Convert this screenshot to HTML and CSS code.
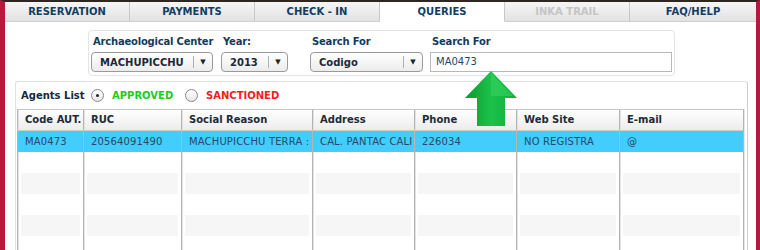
FILE: index.html
```html
<!DOCTYPE html>
<html>
<head>
<meta charset="utf-8">
<link rel="stylesheet" href="styles.css">
</head>
<body>
<div class="frame">
  <div class="tabs">
    <div class="tab">RESERVATION</div>
    <div class="tab">PAYMENTS</div>
    <div class="tab">CHECK - IN</div>
    <div class="tab active">QUERIES</div>
    <div class="tab disabled">INKA TRAIL</div>
    <div class="tab">FAQ/HELP</div>
  </div>
  <div class="content">
    <div class="filters">
      <div class="field f1">
        <div class="label">Archaeological Center</div>
        <div class="select w1"><span class="val">MACHUPICCHU</span><span class="btn">&#9660;</span></div>
      </div>
      <div class="field f2">
        <div class="label">Year:</div>
        <div class="select w2"><span class="val">2013</span><span class="btn">&#9660;</span></div>
      </div>
      <div class="field f3">
        <div class="label">Search For</div>
        <div class="select w3"><span class="val">Codigo</span><span class="btn">&#9660;</span></div>
      </div>
      <div class="field f4">
        <div class="label">Search For</div>
        <div class="input">MA0473</div>
      </div>
    </div>
    <div class="agents">
      <div class="agents-head">
        <span class="title">Agents List</span>
        <span class="radio checked"></span><span class="opt green">APPROVED</span>
        <span class="radio"></span><span class="opt red">SANCTIONED</span>
      </div>
      <div class="grid">
        <div class="row head">
          <div class="c">Code AUT.</div><div class="c">RUC</div><div class="c">Social Reason</div><div class="c">Address</div><div class="c">Phone</div><div class="c">Web Site</div><div class="c">E-mail</div>
        </div>
        <div class="row sel">
          <div class="c">MA0473</div><div class="c">20564091490</div><div class="c">MACHUPICCHU TERRA :</div><div class="c">CAL. PANTAC CALI</div><div class="c">226034</div><div class="c">NO REGISTRA</div><div class="c">@</div>
        </div>
        <div class="row"><div class="c">&nbsp;</div><div class="c">&nbsp;</div><div class="c">&nbsp;</div><div class="c">&nbsp;</div><div class="c">&nbsp;</div><div class="c">&nbsp;</div><div class="c">&nbsp;</div></div>
        <div class="row alt"><div class="c">&nbsp;</div><div class="c">&nbsp;</div><div class="c">&nbsp;</div><div class="c">&nbsp;</div><div class="c">&nbsp;</div><div class="c">&nbsp;</div><div class="c">&nbsp;</div></div>
        <div class="row"><div class="c">&nbsp;</div><div class="c">&nbsp;</div><div class="c">&nbsp;</div><div class="c">&nbsp;</div><div class="c">&nbsp;</div><div class="c">&nbsp;</div><div class="c">&nbsp;</div></div>
        <div class="row alt"><div class="c">&nbsp;</div><div class="c">&nbsp;</div><div class="c">&nbsp;</div><div class="c">&nbsp;</div><div class="c">&nbsp;</div><div class="c">&nbsp;</div><div class="c">&nbsp;</div></div>
        <div class="row"><div class="c">&nbsp;</div><div class="c">&nbsp;</div><div class="c">&nbsp;</div><div class="c">&nbsp;</div><div class="c">&nbsp;</div><div class="c">&nbsp;</div><div class="c">&nbsp;</div></div>
      </div>
    </div>
    <svg class="arrow" width="54" height="56" viewBox="0 0 54 56">
      <defs>
        <linearGradient id="g" x1="0" y1="0" x2="1" y2="0">
          <stop offset="0" stop-color="#0a9a2e"/>
          <stop offset="0.5" stop-color="#1cc24a"/>
          <stop offset="1" stop-color="#0fae3a"/>
        </linearGradient>
      </defs>
      <polygon points="26,0 52,27 40,27 40,55 12,55 12,27 0,27" fill="url(#g)"/>
      <polygon points="26,2 48,25 26,25" fill="#3ad866" opacity="0.5"/>
    </svg>
  </div>
</div>
</body>
</html>
```
FILE: styles.css
```css
html, body {
  margin: 0;
  padding: 0;
  background: #fff;
}
.frame {
  width: 760px;
  height: 250px;
  box-sizing: border-box;
  border-left: 5px solid #b9173b;
  border-right: 4px solid #b9173b;
  border-top: 2px solid #2e2620;
  overflow: hidden;
  font-family: "DejaVu Sans", Verdana, sans-serif;
  position: relative;
}
.tabs {
  display: flex;
  height: 19px;
  border-bottom: 1px solid #cfcfcf;
}
.tab {
  width: 125px;
  box-sizing: border-box;
  text-align: center;
  font-size: 10px;
  font-weight: bold;
  color: #123d63;
  line-height: 19px;
  background: linear-gradient(#f6f6f6, #e2e2e2);
  border-right: 1px solid #c8c8c8;
}
.tab.active {
  background: #fff;
  border-bottom: 1px solid #fff;
  height: 20px;
}
.tab.disabled {
  color: #c4c4c4;
}
.tab:last-child {
  border-right: none;
  width: 126px;
}
.content {
  position: relative;
  padding-top: 8px;
}
.filters {
  margin: 0 0 0 83px;
  width: 587px;
  height: 46px;
  box-sizing: border-box;
  border: 1px solid #e4e4e4;
  border-radius: 4px;
  display: flex;
  padding: 5px 0 0 2px;
}
.field {
  display: flex;
  flex-direction: column;
}
.f1 { width: 130px; }
.f2 { width: 89px; }
.f3 { width: 120px; }
.label {
  font-size: 10px;
  font-weight: bold;
  color: #143a5c;
  padding-left: 2px;
  height: 16px;
  line-height: 12px;
  white-space: nowrap;
  letter-spacing: -0.2px;
}
.select {
  height: 20px;
  box-sizing: border-box;
  border: 1px solid #9a9a9a;
  border-radius: 4px;
  background: linear-gradient(#ffffff, #ececec);
  display: flex;
  align-items: center;
  font-size: 10px;
  font-weight: bold;
  color: #1c2a38;
}
.w1 { width: 122px; }
.w2 { width: 67px; }
.w3 { width: 113px; }
.val {
  flex: 1;
  padding-left: 8px;
}
.btn {
  width: 18px;
  border-left: 1px solid #b0b0b0;
  height: 12px;
  line-height: 12px;
  text-align: center;
  font-size: 7px;
  color: #222;
}
.input {
  width: 242px;
  height: 20px;
  box-sizing: border-box;
  border: 1px solid #b8b8b8;
  font-size: 10px;
  color: #1a4a70;
  padding-left: 5px;
  line-height: 18px;
}
.agents {
  margin: 5px 0 0 10px;
  width: 733px;
  height: 200px;
  box-sizing: border-box;
  border: 1px solid #e2e2e2;
  border-right: 1px solid #cfcfcf;
  border-radius: 3px;
  padding: 0 2px 0 1px;
}
.agents-head {
  height: 27px;
  display: flex;
  align-items: center;
  font-size: 10px;
  font-weight: bold;
}
.title {
  color: #142a40;
  padding-left: 4px;
  width: 70px;
}
.radio {
  width: 11px;
  height: 11px;
  border: 1px solid #8a8a8a;
  border-radius: 50%;
  background: linear-gradient(#fff, #e6e6e6);
  position: relative;
  margin-right: 8px;
}
.radio.checked::after {
  content: "";
  position: absolute;
  left: 4px;
  top: 4px;
  width: 3px;
  height: 3px;
  border-radius: 50%;
  background: #222;
}
.opt.green { color: #1ecb1e; width: 73px; }
.opt.red { color: #f01d1d; }
.grid {
  width: 727px;
  height: 170px;
  box-sizing: border-box;
  border-top: 1px solid #c4c4c4;
  border-right: 1px solid #b4b4b4;
  box-shadow: 1px 0 0 #e6e6e6;
  background-image:
    linear-gradient(#b4b4b4, #b4b4b4),
    linear-gradient(#b4b4b4, #b4b4b4),
    linear-gradient(#b4b4b4, #b4b4b4),
    linear-gradient(#b4b4b4, #b4b4b4),
    linear-gradient(#b4b4b4, #b4b4b4),
    linear-gradient(#b4b4b4, #b4b4b4),
    linear-gradient(#b4b4b4, #b4b4b4);
  background-size: 1px 100%;
  background-repeat: no-repeat;
  background-position: 0 0, 66px 0, 164px 0, 295px 0, 397px 0, 499px 0, 602px 0;
}
.row {
  display: grid;
  grid-template-columns: 66px 98px 131px 102px 102px 103px 1fr;
  height: 21px;
}
.c {
  border-left: 1px solid #b4b4b4;
  box-shadow: inset 1px 0 0 #e2e2e2;
  font-size: 10px;
  line-height: 21px;
  padding-left: 7px;
  white-space: nowrap;
  overflow: hidden;
  color: #2a4868;
  letter-spacing: 0.15px;
}
.row.head {
  height: 20px;
  border-bottom: 1px solid #cdcdcd;
  background: linear-gradient(#ffffff, #ececec);
}
.row.head .c {
  line-height: 20px;
  font-weight: bold;
  color: #1d2b38;
  letter-spacing: 0;
}
.row.sel {
  background: #42cdfc;
}
.row.sel .c {
  box-shadow: none;
}
.row.alt .c {
  background: linear-gradient(90deg, transparent 0, transparent 3px, #f6f6f6 3px, #f6f6f6 calc(100% - 3px), transparent calc(100% - 3px));
}
.arrow {
  position: absolute;
  left: 460px;
  top: 49px;
}
```
